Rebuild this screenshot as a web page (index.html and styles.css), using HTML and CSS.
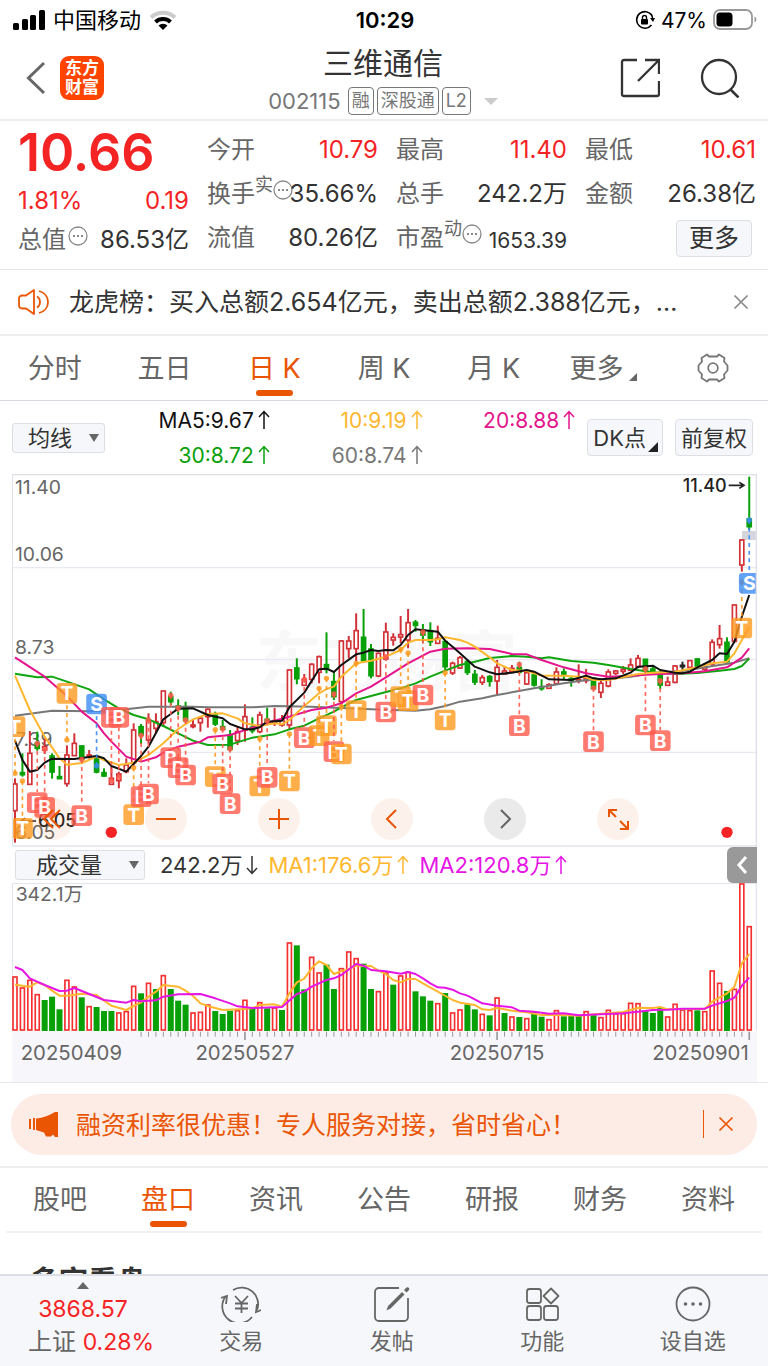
FILE: index.html
```html
<!DOCTYPE html>
<html lang="zh-CN">

<head>
    <meta charset="UTF-8">
    <meta name="viewport" content="width=device-width, initial-scale=1.0">
    <title>三维通信 002115</title>
    <link rel="stylesheet" href="styles.css">
</head>

<body>
    <svg class="defs" aria-hidden="true">
        <symbol id="up" viewBox="0 0 12 20">
            <path d="M6 19V2M1 7l5-5.500L11 7" fill="none" stroke="currentColor" stroke-width="1.500" />
        </symbol>
        <symbol id="down" viewBox="0 0 12 20">
            <path d="M6 1v17M1 13l5 5.500L11 13" fill="none" stroke="currentColor" stroke-width="1.500" />
        </symbol>
        <symbol id="dots" viewBox="0 0 20 20">
            <circle cx="10" cy="10" r="9" fill="none" stroke="#8a8a8a" stroke-width="1.300" />
            <path d="M5 10h2M9 10h2M13 10h2" stroke="#8a8a8a" stroke-width="2" />
        </symbol>
        <symbol id="close" viewBox="0 0 16 16">
            <path d="M1.500 1.500l13 13M14.500 1.500l-13 13" fill="none" stroke="currentColor" stroke-width="1.700" />
        </symbol>
    </svg>

    <div class="status">
        <div class="status-left">
            <svg width="32" height="20" viewBox="0 0 32 20">
                <rect x="0" y="13" width="6" height="7" rx="1.500" />
                <rect x="9" y="9" width="6" height="11" rx="1.500" />
                <rect x="17" y="5" width="6" height="15" rx="1.500" />
                <rect x="26" y="0" width="6" height="20" rx="1.500" />
            </svg>
            <span>中国移动</span>
            <svg width="28" height="20" viewBox="0 0 28 20">
                <path d="M2 7.500a17.500 17.500 0 0 1 24 0" fill="none" stroke="#ccc" stroke-width="4" />
                <path d="M6.500 12a11 11 0 0 1 15 0" fill="none" stroke="#000" stroke-width="4" />
                <path d="M14 20l-4.500-4.500a6.500 6.500 0 0 1 9 0z" />
            </svg>
        </div>
        <time>10:29</time>
        <div class="status-right">
            <svg width="20" height="20" viewBox="0 0 20 20">
                <path d="M17 5.500a8.300 8.300 0 1 0-.5 9.500M16 4a8.300 8.300 0 0 1 1.500 5" fill="none" stroke="#000" stroke-width="1.600" />
                <path d="M15 8h5l-2 4z" />
                <rect x="6" y="9" width="7" height="5.500" rx="1" />
                <path d="M7.500 9V7.500a2 2 0 0 1 4 0V9" fill="none" stroke="#000" stroke-width="1.400" />
            </svg>
            <span>47%</span>
            <svg width="44" height="22" viewBox="0 0 44 22">
                <rect x="1" y="1" width="38" height="19" rx="6" fill="none" stroke="#999" stroke-width="1.800" />
                <rect x="3.500" y="3.500" width="16" height="14" rx="3.500" />
                <path d="M41.500 7.500c2.500 1 2.500 5 0 6z" fill="#999" />
            </svg>
        </div>
    </div>

    <header class="nav">
        <div class="nav-side">
            <button class="icon-btn" aria-label="返回">
                <svg width="20" height="34" viewBox="0 0 20 34">
                    <path d="M18 2L2.500 17 18 32" fill="none" stroke="#666" stroke-width="3" />
                </svg>
            </button>
            <a class="logo" href="#">东方<br>财富</a>
        </div>
        <div class="nav-title">
            <h1>三维通信</h1>
            <p><span>002115</span><i>融</i><i>深股通</i><i>L2</i><b class="tri-down"></b></p>
        </div>
        <div class="nav-side nav-right">
            <button class="icon-btn" aria-label="分享">
                <svg width="40" height="40" viewBox="0 0 40 40">
                    <path d="M17 2H4a2 2 0 0 0-2 2v32a2 2 0 0 0 2 2h33a2 2 0 0 0 2-2V23M25 2h14v14M38 3L18 23" fill="none" stroke="#333" stroke-width="2.300" />
                </svg>
            </button>
            <button class="icon-btn" aria-label="搜索">
                <svg width="40" height="40" viewBox="0 0 40 40">
                    <circle cx="19" cy="19" r="17" fill="none" stroke="#333" stroke-width="2.300" />
                    <path d="M30 31l8.500 8.500" stroke="#333" stroke-width="2.500" />
                </svg>
            </button>
        </div>
    </header>

    <main>
        <section class="quote">
            <div class="quote-col first">
                <div class="price">10.66</div>
                <div class="change"><span>1.81%</span><span>0.19</span></div>
                <div class="cell"><span>总值<svg class="info"><use href="#dots" /></svg></span><b>86.53亿</b></div>
            </div>
            <div class="quote-col">
                <div class="cell"><span>今开</span><b class="red">10.79</b></div>
                <div class="cell"><span>换手<sup>实</sup><svg class="info"><use href="#dots" /></svg></span><b>35.66%</b></div>
                <div class="cell"><span>流值</span><b>80.26亿</b></div>
            </div>
            <div class="quote-col">
                <div class="cell"><span>最高</span><b class="red">11.40</b></div>
                <div class="cell"><span>总手</span><b>242.2万</b></div>
                <div class="cell"><span>市盈<sup>动</sup><svg class="info"><use href="#dots" /></svg></span><b class="small">1653.39</b></div>
            </div>
            <div class="quote-col">
                <div class="cell"><span>最低</span><b class="red">10.61</b></div>
                <div class="cell"><span>金额</span><b>26.38亿</b></div>
                <div class="cell more"><button class="box-btn">更多</button></div>
            </div>
        </section>

        <section class="notice">
            <svg width="32" height="26" viewBox="0 0 32 26">
                <path d="M4 6.500h4L16 1v24L8 19.500H4a3 3 0 0 1-3-3v-7a3 3 0 0 1 3-3z" fill="none" stroke="#ea5504" stroke-width="1.800" stroke-linejoin="round" />
                <path d="M19 7.500c4 2 4 9 0 11M21 2c12 3 12 19 0 22" fill="none" stroke="#ea5504" stroke-width="1.800" />
            </svg>
            <a href="#">龙虎榜：买入总额2.654亿元，卖出总额2.388亿元，…</a>
            <button class="icon-btn" aria-label="关闭"><svg width="16" height="16"><use href="#close" /></svg></button>
        </section>

        <nav class="tabs">
            <a href="#">分时</a>
            <a href="#">五日</a>
            <a href="#" class="active">日 K</a>
            <a href="#">周 K</a>
            <a href="#">月 K</a>
            <a href="#">更多<b class="corner"></b></a>
            <a href="#" aria-label="设置">
                <svg width="32" height="30" viewBox="0 0 32 30">
                    <path d="M12 3.500L10 1.500 4.500 5 5 8.500 1.500 12.500v5L5 21.500l-.5 3.500L10 28.500l2-2h8l2 2 5.500-3.500-.5-3.500 3.500-4v-5L27 8.500 27.500 5 22 1.500l-2 2z" fill="none" stroke="#777" stroke-width="1.800" stroke-linejoin="round" />
                    <circle cx="16" cy="15" r="4.800" fill="none" stroke="#777" stroke-width="1.800" />
                </svg>
            </a>
        </nav>

        <section class="ma">
            <div class="select ma-select">
                <select aria-label="主图指标"><option>均线</option></select>
            </div>
            <div class="ma-values">
                <span class="ma5">MA5:9.67<svg class="arrow"><use href="#up" /></svg></span>
                <span class="ma10">10:9.19<svg class="arrow"><use href="#up" /></svg></span>
                <span class="ma20">20:8.88<svg class="arrow"><use href="#up" /></svg></span>
                <span class="ma30">30:8.72<svg class="arrow"><use href="#up" /></svg></span>
                <span class="ma60">60:8.74<svg class="arrow"><use href="#up" /></svg></span>
            </div>
            <button class="box-btn dk">DK点<b class="corner"></b></button>
            <button class="box-btn">前复权</button>
        </section>

        <section class="chart">
            <svg id="kline" viewBox="36 12 2235 1118"></svg>
            <div class="tools">
                <button aria-label="最左"><svg viewBox="0 0 42 42"><path d="M21 12l-9 9 9 9M28 12l-9 9 9 9" /></svg></button>
                <button aria-label="缩小"><svg viewBox="0 0 42 42"><path d="M11 21h20" /></svg></button>
                <button aria-label="放大"><svg viewBox="0 0 42 42"><path d="M11 21h20M21 11v20" /></svg></button>
                <button aria-label="左移"><svg viewBox="0 0 42 42"><path d="M25 12l-9 9 9 9" /></svg></button>
                <button aria-label="右移" class="off"><svg viewBox="0 0 42 42"><path d="M17 12l9 9-9 9" /></svg></button>
                <button aria-label="全屏"><svg viewBox="0 0 42 42"><path d="M12 19v-7h8M12 12l7 7M31 23v8h-8M31 31l-8-8" /></svg></button>
            </div>
        </section>

        <section class="vol-head">
            <div class="select vol-select">
                <select aria-label="副图指标"><option>成交量</option></select>
            </div>
            <span>242.2万<svg class="arrow"><use href="#down" /></svg></span>
            <span class="ma10">MA1:176.6万<svg class="arrow"><use href="#up" /></svg></span>
            <span class="vol-ma2">MA2:120.8万<svg class="arrow"><use href="#up" /></svg></span>
            <button class="fold" aria-label="展开">
                <svg width="12" height="20" viewBox="0 0 12 20"><path d="M10 2L3 10l7 8" fill="none" stroke="#fff" stroke-width="3" /></svg>
            </button>
        </section>
        <section class="chart">
            <svg id="volume" viewBox="36 129 2235 597"></svg>
        </section>

        <section class="promo">
            <div class="pill">
                <svg width="30" height="26" viewBox="0 0 30 26">
                    <path d="M1 8v10M5 7v12" stroke="#ea5504" stroke-width="2" />
                    <path d="M7 7.500C14 7 21 4 26 1h3v25h-3l-2-2.500-2 2h-5l-2-4-8-2.500z" fill="#ea5504" />
                </svg>
                <a href="#">融资利率很优惠！专人服务对接，省时省心！</a>
                <button class="icon-btn" aria-label="关闭广告"><svg width="16" height="16"><use href="#close" /></svg></button>
            </div>
        </section>

        <nav class="tabs sub-tabs">
            <a href="#">股吧</a>
            <a href="#" class="active">盘口</a>
            <a href="#">资讯</a>
            <a href="#">公告</a>
            <a href="#">研报</a>
            <a href="#">财务</a>
            <a href="#">资料</a>
        </nav>
        <h2>多空看盘</h2>
    </main>

    <footer>
        <a href="#" class="index">
            <b class="tri-up"></b>
            <span class="red">3868.57</span>
            <span>上证 <em class="red">0.28%</em></span>
        </a>
        <a href="#">
            <svg width="40" height="36" viewBox="0 0 40 36">
                <g fill="none" stroke="#666" stroke-width="1.800">
                    <path d="M12 4A16.500 16.500 0 0 1 36 24M31 31A16.500 16.500 0 0 1 5 10" />
                    <path d="M0 12l6-2-1 8M40 24l-5 2 1-8" />
                    <path d="M14 10l6.500 7 6.500-7M20.500 17v10M14 17.500h13M14 22.500h13" />
                </g>
            </svg>
            <span>交易</span>
        </a>
        <a href="#">
            <svg width="36" height="36" viewBox="0 0 36 36">
                <path d="M25 2H5a4 4 0 0 0-4 4v25a4 4 0 0 0 4 4h25a4 4 0 0 0 4-4V12" fill="none" stroke="#666" stroke-width="1.800" />
                <path d="M28 6l2.500 2.500-14 14-4 2 1.500-4.500zM30 4l2.500-2.500a1.800 1.800 0 0 1 2.500 2.500L32.500 6.500z" fill="#666" />
            </svg>
            <span>发帖</span>
        </a>
        <a href="#">
            <svg width="36" height="36" viewBox="0 0 36 36">
                <g fill="none" stroke="#666" stroke-width="1.800">
                    <rect x="3" y="3" width="14" height="14" rx="2.500" />
                    <rect x="3" y="20" width="14" height="14" rx="2.500" />
                    <rect x="20" y="20" width="14" height="14" rx="2.500" />
                    <path d="M27 2.500L34.500 10 27 17.500 19.500 10z" stroke-linejoin="round" />
                </g>
            </svg>
            <span>功能</span>
        </a>
        <a href="#">
            <svg width="36" height="36" viewBox="0 0 36 36">
                <circle cx="18" cy="18" r="16.500" fill="none" stroke="#666" stroke-width="1.800" />
                <circle cx="10.500" cy="18" r="1.800" fill="#666" />
                <circle cx="18" cy="18" r="1.800" fill="#666" />
                <circle cx="25.500" cy="18" r="1.800" fill="#666" />
            </svg>
            <span>设自选</span>
        </a>
    </footer>
    <script src="chart.js"></script>
</body>

</html>
```
FILE: styles.css
```css
* {
    box-sizing: border-box;
}

body {
    margin: 0;
    height: 100vh;
    display: flex;
    flex-direction: column;
    overflow: hidden;
    background-color: white;
    color: #333;
    font-family: Inter, "Noto Sans CJK SC", sans-serif;
    font-size: 22px;
    line-height: 1;
}

h1, h2, p {
    margin: 0;
    font-weight: 400;
}

a {
    color: inherit;
    text-decoration: none;
}

b, i, em {
    font-weight: 400;
    font-style: normal;
}

button, select {
    font: inherit;
    color: inherit;
    padding: 0;
    border: none;
    background: none;
}

svg {
    display: block;
    flex: none;
}

.defs {
    position: absolute;
    width: 0;
    height: 0;
}

.icon-btn {
    display: flex;
}

.red {
    color: #f52424;
}

/* status bar */
.status {
    height: 40px;
    flex: none;
    padding: 0 11px 0 13px;
    display: grid;
    grid-template-columns: 1fr auto 1fr;
    align-items: center;
    color: black;
}

.status-left, .status-right {
    display: flex;
    align-items: center;
    gap: 8px;
}

.status-right {
    justify-content: flex-end;
    gap: 6px;
    font-size: 21px;
}

.status time {
    font-weight: 600;
}

/* title */
.nav {
    height: 81px;
    flex: none;
    padding: 0 28px 0 26px;
    display: grid;
    grid-template-columns: 1fr auto 1fr;
    border-bottom: 2px solid #eee;
}

.nav-side {
    display: flex;
    align-items: center;
    gap: 14px;
    padding-bottom: 4px;
}

.nav-right {
    justify-content: flex-end;
    gap: 40px;
}

.logo {
    width: 44px;
    height: 44px;
    padding-top: 3px;
    border-radius: 9px;
    background-color: #ff4400;
    color: white;
    font-size: 17px;
    font-weight: 700;
    line-height: 19px;
    text-align: center;
}

.nav-title {
    text-align: center;
}

.nav-title h1 {
    font-size: 30px;
    line-height: 46px;
}

.nav-title p {
    display: flex;
    align-items: center;
    justify-content: center;
    gap: 3px;
    height: 30px;
    font-size: 22px;
    color: #777;
}

.nav-title p span {
    margin-right: 4px;
}

.nav-title i {
    height: 28px;
    padding: 0 3px;
    border: 1px solid #777;
    border-radius: 4px;
    font-size: 18px;
    line-height: 26px;
}

.tri-down {
    margin-left: 10px;
    border: 7px solid transparent;
    border-top-color: #ccc;
    border-bottom: none;
}

main {
    flex: 1;
    min-height: 0;
    overflow: hidden;
}

/* quote */
.quote {
    display: grid;
    grid-template-columns: repeat(4, 1fr);
    gap: 18px;
    padding: 7px 12px 9px 18px;
    border-bottom: 1px solid #e4e4e8;
}

.price {
    height: 52px;
    color: #f52424;
    font-size: 52px;
    font-weight: 600;
    line-height: 50px;
}

.change {
    height: 42px;
    display: flex;
    justify-content: space-between;
    align-items: center;
    font-size: 24px;
    color: #f52424;
}

.cell {
    height: 44px;
    display: flex;
    justify-content: space-between;
    align-items: center;
    white-space: nowrap;
    font-size: 24px;
}

.first .cell {
    height: 36px;
}

.cell span {
    display: flex;
    align-items: center;
    color: #666;
}

.cell sup {
    font-size: 18px;
    align-self: flex-start;
    margin-top: -4px;
}

.cell b {
    margin-left: -5px;
}

.cell .small {
    font-size: 21px;
    padding-top: 4px;
}

.info {
    width: 20px;
    height: 20px;
    margin: 0 2px 8px;
}

sup + .info {
    margin: 0 0 8px;
}

.cell.more {
    justify-content: flex-end;
    padding-right: 4px;
}

.box-btn {
    position: relative;
    height: 37px;
    padding: 0 5px;
    border: 1px solid #dcdee4;
    border-radius: 4px;
    background-color: #f6f7fa;
    white-space: nowrap;
}

.box-btn.dk {
    padding-right: 16px;
}

.more .box-btn {
    padding: 0 12px;
    font-size: 25px;
}

.corner {
    border: 5px solid #222;
    border-top-color: transparent;
    border-left-color: transparent;
}

.box-btn .corner {
    position: absolute;
    right: 4px;
    bottom: 3px;
}

/* notice */
.notice {
    height: 66px;
    display: flex;
    align-items: center;
    gap: 19px;
    padding: 0 19px 0 18px;
    border-bottom: 2px solid #eee;
    color: #888;
}

.notice a {
    flex: 1;
    min-width: 0;
    overflow: hidden;
    white-space: nowrap;
    font-size: 25px;
    line-height: 32px;
    color: #333;
}

/* tabs */
.tabs {
    height: 65px;
    display: flex;
    border-bottom: 1px solid #d9dae2;
    font-size: 27px;
    color: #666;
}

.tabs a {
    position: relative;
    flex: 1;
    display: flex;
    align-items: center;
    justify-content: center;
}

.tabs .corner {
    margin: 18px 0 0 6px;
    border-width: 4px;
    border-right-color: #666;
    border-bottom-color: #666;
}

.tabs .active {
    color: #ea5504;
}

.tabs .active::after {
    content: "";
    position: absolute;
    bottom: 4px;
    width: 37px;
    height: 6px;
    border-radius: 3px;
    background-color: #ea5504;
}

/* indicators */
.ma {
    display: flex;
    align-items: center;
    gap: 12px;
    height: 73px;
    padding: 0 15px 0 12px;
}

.ma-values {
    flex: 1;
    display: grid;
    grid-template-columns: repeat(3, 1fr);
    font-size: 21px;
    line-height: 35px;
}

.ma-values span, .vol-head span {
    display: flex;
    align-items: center;
    justify-content: flex-end;
    gap: 4px;
    white-space: nowrap;
}

.arrow {
    width: 12px;
    height: 20px;
}

.ma5 { color: #111; }
.ma10 { color: #ffb72f; }
.ma20 { color: #e4148c; }
.ma30 { color: #0a9f0a; }
.ma60 { color: #777; }
.vol-ma2 { color: #e516e5; }

.select {
    position: relative;
    height: 30px;
    border: 1px solid #dcdee4;
    border-radius: 3px;
    background-color: #f6f7fa;
}

.select select {
    width: 100%;
    height: 100%;
    appearance: none;
}

.select::after {
    content: "";
    position: absolute;
    right: 5px;
    top: 10px;
    border: 5px solid transparent;
    border-top: 8px solid #666;
    border-bottom: none;
    pointer-events: none;
}

.ma-select {
    width: 93px;
}

.ma-select select {
    padding-left: 15px;
}

.vol-select {
    width: 130px;
    margin-right: 5px;
}

.vol-select select {
    padding-left: 20px;
}

.vol-head {
    position: relative;
    height: 36px;
    margin: 0 11px;
    padding-left: 4px;
    display: flex;
    align-items: center;
    gap: 10px;
}

.fold {
    position: absolute;
    right: 0;
    top: 0;
    width: 30px;
    height: 36px;
    padding-left: 9px;
    border-radius: 6px 0 0 6px;
    background-color: #999;
}

/* charts */
.chart {
    position: relative;
    margin: 0 11px 0 12px;
}

.chart > svg {
    width: 100%;
    height: auto;
}

.chart text {
    font-size: 58px;
    fill: #666;
}

.chart .note {
    font-size: 54px;
    font-weight: 500;
    fill: #222;
}

.chart .mark {
    font-weight: 700;
    fill: white;
    text-anchor: middle;
}

.chart .watermark {
    font-size: 196px;
    font-weight: 700;
    fill: #f8f8f8;
}

.chart .date {
    font-size: 61px;
}

.tools {
    position: absolute;
    left: 20px;
    bottom: 7px;
    display: flex;
    gap: 71px;
}

.tools button {
    width: 42px;
    height: 42px;
    border-radius: 50%;
    background-color: rgba(234, 85, 4, 0.08);
}

.tools path {
    fill: none;
    stroke: #ea5504;
    stroke-width: 2;
}

.tools .off {
    background-color: #eaeaea;
}

.tools .off path {
    stroke: #666;
}

/* promo */
.promo {
    padding: 11px;
    border-top: 1px solid #e6e7ec;
    border-bottom: 2px solid #eee;
}

.pill {
    height: 61px;
    padding: 0 23px 0 18px;
    display: flex;
    align-items: center;
    gap: 17px;
    border-radius: 31px;
    background-color: #fdece5;
    color: #ea5504;
}

.pill a {
    flex: 1;
    padding-top: 2px;
    font-size: 25px;
    white-space: nowrap;
}

.pill .icon-btn {
    padding: 6px 0 6px 14px;
    border-left: 1px solid #ea5504;
}

.sub-tabs {
    margin: 0 6px;
    border-bottom: 2px solid #f0f0f0;
}

h2 {
    padding: 33px 30px 0;
    font-size: 29px;
    font-weight: 700;
    line-height: 32px;
}

/* bottom bar */
footer {
    height: 92px;
    flex: none;
    display: grid;
    grid-template-columns: 166px repeat(4, 1fr);
    border-top: 2px solid #dedfe4;
    background-color: #f6f7fa;
    color: #666;
}

footer a {
    display: flex;
    flex-direction: column;
    align-items: center;
    gap: 6px;
    padding-top: 10px;
    line-height: 26px;
}

footer .index {
    gap: 7px;
    padding: 6px 0 0 16px;
    font-size: 24px;
}

.index .red {
    font-size: 23px;
}

.index span.red, .tri-up {
    margin-right: 16px;
}

.tri-up {
    border: 6px solid transparent;
    border-bottom: 7px solid #666;
    border-top: none;
}
```
FILE: chart.js
```javascript
// kind, high, body top, body bottom, low
const candles = [
    "r 925 942 1022 1118", "g 850 908 914 920", "r 783 850 943 943", "g 785 820 835 842", "r 805 830 840 852",
    "g 850 858 906 926", "g 888 920 926 926", "r 826 855 941 950", "r 790 820 857 857", "g 826 828 868 880",
    "r 840 855 860 866", "g 855 860 906 910", "g 895 908 918 920", "r 890 925 943 943", "r 905 912 932 955",
    "r 865 885 905 910", "r 760 780 878 890", "g 762 770 795 822", "r 730 752 810 820", "r 730 755 775 790",
    "r 663 663 758 770", "g 665 680 695 705", "g 688 708 718 735", "g 695 710 752 758", "r 748 765 770 775",
    "r 738 745 758 785", "r 715 718 740 773", "g 725 735 762 768", "g 750 770 778 782", "g 780 795 838 845",
    "r 770 785 812 825", "r 703 740 780 815", "g 742 772 782 790", "r 725 735 785 790", "g 713 748 760 765",
    "r 714 752 760 768", "r 735 748 765 770", "r 598 600 765 778", "g 565 594 626 643", "r 612 628 646 648",
    "r 580 583 628 640", "r 557 560 607 640", "g 487 584 598 610", "g 605 635 680 690", "r 510 513 695 710",
    "r 498 513 536 565", "r 430 482 536 575", "g 417 502 572 575", "g 522 537 617 625", "r 548 550 618 622",
    "r 458 486 567 572", "r 490 502 510 527", "r 438 494 501 520", "r 417 458 510 535", "g 450 457 466 485",
    "g 462 480 495 518", "g 457 482 515 528", "r 467 505 520 522", "g 510 515 590 605", "r 575 580 609 615",
    "r 558 563 594 597", "g 568 575 607 615", "g 600 613 636 645", "r 615 623 637 645", "g 615 620 634 650",
    "r 570 592 633 672", "r 590 603 612 612", "r 585 595 605 608", "g 575 592 606 612", "r 608 608 642 645",
    "g 610 615 645 650", "g 628 650 656 662", "r 640 644 655 656", "r 592 606 641 645", "g 595 606 612 628",
    "g 620 626 632 650", "r 583 628 633 640", "r 597 625 632 640", "g 622 625 656 656", "r 632 640 667 684",
    "r 598 606 648 652", "r 600 603 610 615", "r 588 598 604 612", "r 565 585 601 603", "r 555 565 590 595",
    "g 567 568 602 607", "g 587 597 605 610", "g 600 615 645 657", "r 620 636 646 647", "r 585 588 637 640",
    "k 575 586 590 605", "r 570 572 592 594", "g 565 567 592 598", "r 580 592 598 606", "r 508 517 582 590",
    "r 465 506 524 536", "g 502 517 575 580", "r 404 405 514 518", "r 208 210 285 305", "g 20 147 170 180"
];

// index, level
const averages = {
    "#777777": "0 737 5 722 10 724 14 720 18 710 24 710 26 712 32 712 35 708 40 710 44 714 48 718 54 722 56 718 58 708 60 695 63 685 65 675 67 667 70 655 74 640 77 630 80 627 83 620 86 610 90 602 95 585 97 578 99 565",
    "#0fa50f": "0 611 3 622 5 620 7 635 10 658 12 688 14 715 16 735 18 748 20 768 22 790 24 812 26 825 29 824 32 803 35 793 37 778 39 767 41 745 43 725 44 712 46 690 49 672 52 655 54 640 56 620 58 602 60 585 62 575 64 564 67 558 69 560 71 565 72 562 75 573 78 578 80 585 83 597 86 607 89 612 92 609 95 602 97 597 98 588 99 566",
    "#e4148c": "0 562 4 620 7 678 9 725 11 760 12 790 13 815 15 860 17 875 19 862 20 848 22 830 25 815 26 802 29 795 32 773 35 752 37 740 40 720 42 713 44 700 46 670 48 650 50 622 53 580 56 545 58 536 61 535 64 537 66 547 67 552 69 553 71 570 74 592 77 610 80 620 83 617 85 614 87 612 90 610 93 604 96 592 98 563 99 535",
    "#ffb72f": "0 617 2 720 4 800 6 865 7 884 9 879 11 860 12 870 14 885 16 878 18 855 20 820 22 777 24 748 26 732 28 730 30 745 31 760 33 768 35 760 36 763 37 750 39 708 41 670 42 657 43 650 44 620 46 580 48 572 50 560 52 540 53 518 54 510 56 510 57 508 58 502 60 510 61 518 62 530 64 562 65 580 67 600 69 603 70 610 71 617 74 617 76 620 77 622 78 630 80 630 84 612 86 608 89 605 92 592 94 580 96 575 97 550 98 510 99 470",
    "#111111": "0 812 1 870 2 905 3 900 4 878 5 866 8 867 9 864 11 858 12 865 13 888 15 905 17 858 18 830 20 748 21 732 22 716 24 715 26 735 28 745 29 762 31 778 32 778 33 772 34 755 36 752 37 712 39 668 41 598 42 596 43 606 44 585 46 553 47 548 48 540 49 543 50 540 51 541 52 525 53 495 54 478 57 485 58 512 59 530 60 550 61 570 62 590 64 607 65 613 67 608 69 600 70 605 72 628 75 630 77 617 78 625 79 628 81 625 83 608 84 590 86 587 87 600 89 608 90 610 91 605 92 592 94 570 95 550 96 552 97 515 98 440 99 375"
};

// letter, index, dot, label
const marks = [
    "T 0 910 770", "T 1 933 1075", "B 3 820 998", "B 4 838 1012", "T 7 810 670", "B 9 868 1037", "S 11 888 702",
    "B 13 932 742", "B 14 922 742", "T 16 893 1034", "B 17 796 980", "B 18 750 972", "B 21 676 863",
    "B 22 714 893", "B 23 750 915", "T 27 779 920", "B 28 776 942", "B 29 836 1001", "T 33 806 948",
    "B 34 752 922", "T 37 792 933", "B 39 628 803", "T 41 655 797", "T 42 625 767", "B 43 672 845",
    "T 44 710 852", "T 46 580 722", "B 50 560 726", "T 52 538 680", "T 53 549 692", "B 55 486 675",
    "T 58 608 750", "B 68 583 767", "B 78 654 815", "B 85 597 765", "B 87 632 812", "T 98 335 474", "S 99 150 340"
];

const volumes = ("r409 r442 r419 r462 g480 g470 g508 r419 r439 g472 r498 g501 g513 g513 r517 r513 r437 g460 r428 g447 " +
    "r405 g447 g482 g494 r517 r515 r493 g513 g522 g512 r510 r479 g507 r486 g505 r502 g510 r307 g316 g448 " +
    "r350 r397 g374 g447 r384 r334 r354 g371 g447 r453 r397 g434 r406 r395 g454 g469 g482 r489 g459 r517 " +
    "r508 g493 g508 r521 g526 r472 g519 r529 g531 r534 g515 g530 r537 r510 g529 g528 g527 r513 g525 r531 " +
    "r509 r520 r519 r488 r489 g512 g519 g503 r529 r491 r508 r510 g511 r513 r391 r428 g453 r446 r130 r258").split(" ");

const volumeAverages = {
    "#ffb72f": "0 434 2 440 3 427 4 435 5 452 6 467 7 467 9 461 11 465 12 482 13 497 15 510 16 498 17 487 18 470 19 455 20 435 22 440 23 452 24 468 25 490 26 498 28 510 31 507 32 505 33 495 35 493 36 500 37 460 38 427 39 416 40 385 41 364 42 375 43 402 44 393 45 388 46 377 48 378 49 392 50 402 51 420 52 427 53 417 54 417 55 430 57 455 59 480 60 488 62 495 63 508 64 510 65 504 67 512 69 517 71 525 73 524 76 527 79 521 82 516 84 503 86 504 87 501 88 508 90 507 93 507 94 485 96 460 97 440 98 370 99 342",
    "#e516e5": "0 381 1 390 2 415 4 435 6 453 7 452 8 444 10 462 12 480 15 488 16 480 17 484 19 481 20 470 22 463 25 462 27 475 29 490 30 499 32 504 36 501 38 462 39 455 40 440 42 420 43 415 44 405 46 372 47 377 48 390 50 394 52 401 53 396 54 402 55 415 56 430 57 442 58 443 59 449 60 460 61 467 62 478 63 490 65 497 67 502 68 512 70 515 72 521 74 520 76 526 82 520 84 515 86 510 88 509 90 506 93 506 94 497 96 483 97 473 98 437 99 413"
};

const colors = { r: "#d23237", g: "#07a007", k: "#222222" };
const markColors = { B: "#ff5a4c", T: "#ff9a1f", S: "#3b8cf5" };

function posX(i) {
    return 45 + 22.25 * i;
}

function line(x1, y1, x2, y2, color, width) {
    return `<path d="M${x1} ${y1}L${x2} ${y2}" stroke="${color}" stroke-width="${width}"/>`;
}

function curves(set) {
    let out = "";
    for (const color in set) {
        const n = set[color].split(" ").map(Number);
        let points = "";
        for (let i = 0; i < n.length; i += 2) {
            points += posX(n[i]) + "," + n[i + 1] + " ";
        }
        out += `<polyline points="${points}" fill="none" stroke="${color}" stroke-width="6" stroke-linejoin="round"/>`;
    }
    return out;
}

function drawKline() {
    let out = `<text class="watermark" x="768" y="645">东方财富</text>`;
    for (const y of [293, 569, 847]) {
        out += line(36, y, 2270, y, "#e8e9f1", 4);
    }
    const labels = [["11.40", 72], ["10.06", 272], ["8.73", 552], ["7.39", 828], ["6.05", 1106]];
    for (const [text, y] of labels) {
        out += `<text x="45" y="${y}">${text}</text>`;
    }
    out += `<rect x="2226" y="183" width="44" height="27" fill="#d4d6dc"/>`;
    candles.forEach((row, i) => {
        const [kind, high, top, bottom, low] = row.split(" ");
        const x = posX(i), c = colors[kind];
        out += line(x, high, x, top, c, 6) + line(x, bottom, x, low, c, 6);
        out += `<rect x="${x - 6}" y="${top}" width="12" height="${bottom - top}" fill="${kind == "r" ? "white" : c}" stroke="${c}" stroke-width="5"/>`;
    });
    out += curves(averages);
    out += `<text class="note" x="114" y="1072">6.05</text><path d="M108 1053H62M76 1044l-14 9 14 9" fill="none" stroke="#222" stroke-width="4"/>`;
    out += `<text class="note" x="2180" y="66" text-anchor="end">11.40</text><path d="M2186 46h44M2218 37l14 9-14 9" fill="none" stroke="#222" stroke-width="5"/>`;
    for (const row of marks) {
        const [letter, index, dot, label] = row.split(" ");
        const x = posX(index), y = Number(label), c = markColors[letter];
        const edge = dot < y ? y - 32 : y + 32;
        out += `<path d="M${x} ${dot}V${edge}" stroke="${c}" stroke-width="5" stroke-dasharray="12 11" opacity="0.9"/>`;
        out += `<circle cx="${x}" cy="${dot}" r="8" fill="${c}" opacity="0.85"/>`;
        out += `<rect x="${x - 31}" y="${y - 31}" width="62" height="62" rx="10" fill="${c}" opacity="0.8"/>`;
        out += `<text class="mark" x="${x}" y="${y + 21}">${letter}</text>`;
    }
    out += `<circle cx="334" cy="1087" r="17" fill="#f52424"/><circle cx="2181" cy="1087" r="17" fill="#f52424"/>`;
    out += `<rect x="37" y="14" width="2232" height="1114" fill="none" stroke="#dfe0e8" stroke-width="4"/>`;
    document.querySelector("#kline").innerHTML = out;
}

function drawVolume() {
    let out = `<path d="M36 130H2270M37 129V572M2269 129V572" stroke="#e4e5ec" stroke-width="4"/>`;
    out += `<rect x="36" y="574" width="2235" height="152" fill="#f7f7fb"/>`;
    out += `<text x="47" y="184">342.1万</text>`;
    volumes.forEach((v, i) => {
        const x = posX(i), top = Number(v.slice(1));
        if (v[0] == "r") {
            out += `<rect x="${x - 6}" y="${top + 2}" width="12" height="${568 - top}" fill="white" stroke="#f53030" stroke-width="5"/>`;
        } else {
            out += `<rect x="${x - 9}" y="${top}" width="18" height="${573 - top}" fill="#07a007"/>`;
        }
        if (i > 16) {
            const long = i == 31 || i == 65 || i == 99;
            out += line(x, 575, x, long ? 600 : 590, "#999", long ? 5 : 3);
        }
    });
    out += curves(volumeAverages);
    out += `<text class="date" x="62" y="660">20250409</text>`;
    out += `<text class="date" x="735" y="660" text-anchor="middle">20250527</text>`;
    out += `<text class="date" x="1491" y="660" text-anchor="middle">20250715</text>`;
    out += `<text class="date" x="2246" y="660" text-anchor="end">20250901</text>`;
    document.querySelector("#volume").innerHTML = out;
}

drawKline();
drawVolume();
```
